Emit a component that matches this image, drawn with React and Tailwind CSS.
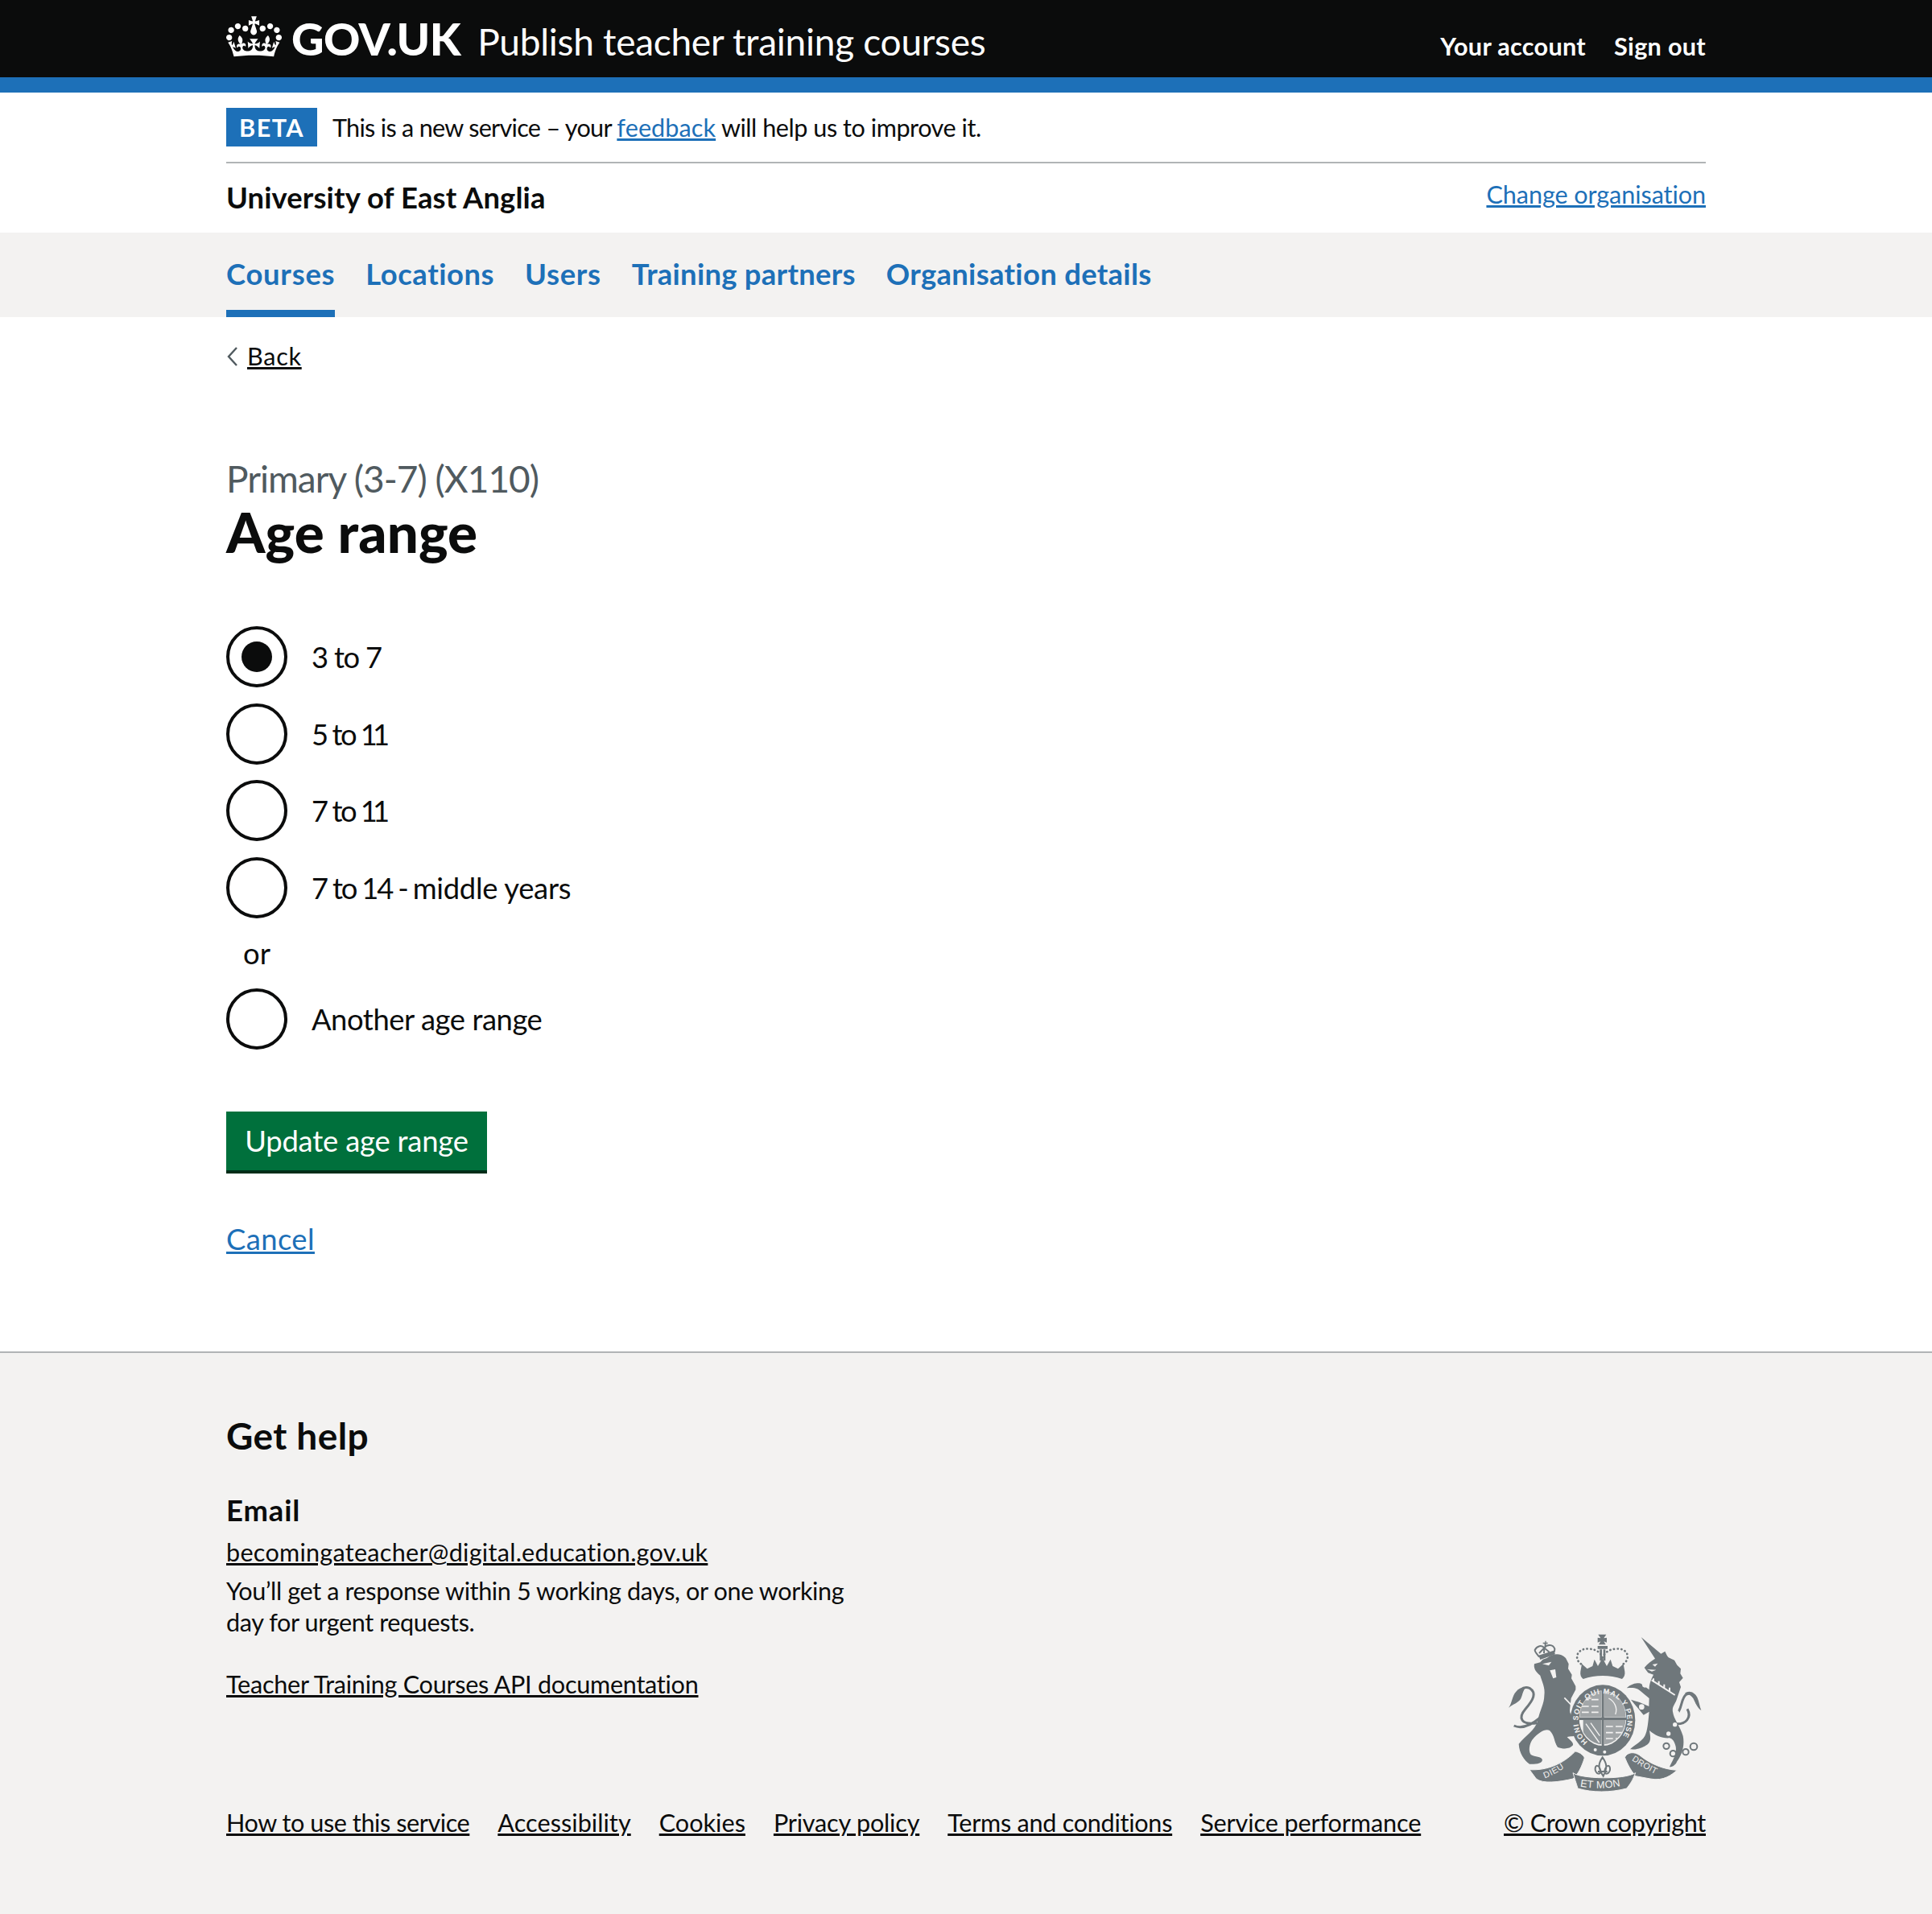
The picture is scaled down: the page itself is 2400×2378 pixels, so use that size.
const crown = "M25 30.2c3.5 1.5 7.7-.2 9.1-3.7 1.5-3.6-.2-7.8-3.9-9.2-3.6-1.4-7.6.3-9.1 3.9-1.4 3.5.3 7.5 3.9 9zM9 39.5c3.6 1.5 7.8-.2 9.2-3.7 1.5-3.6-.2-7.8-3.9-9.1-3.6-1.5-7.6.2-9.1 3.8-1.4 3.5.3 7.5 3.8 9zM4.4 57.2c3.5 1.5 7.7-.2 9.1-3.8 1.5-3.6-.2-7.7-3.9-9.1-3.5-1.5-7.6.3-9.1 3.8-1.4 3.5.3 7.6 3.9 9.1zm38.3-21.4c3.5 1.5 7.7-.2 9.1-3.8 1.5-3.6-.2-7.7-3.9-9.1-3.6-1.5-7.6.3-9.1 3.8-1.3 3.6.4 7.7 3.9 9.1zm64.4-5.6c-3.6 1.5-7.8-.2-9.1-3.7-1.5-3.6.2-7.8 3.8-9.2 3.6-1.4 7.7.3 9.2 3.9 1.3 3.5-.4 7.5-3.9 9zm15.9 9.3c-3.6 1.5-7.7-.2-9.1-3.7-1.5-3.6.2-7.8 3.7-9.1 3.6-1.5 7.7.2 9.2 3.8 1.5 3.5-.3 7.5-3.8 9zm4.7 17.7c-3.6 1.5-7.8-.2-9.2-3.8-1.5-3.6.2-7.7 3.9-9.1 3.6-1.5 7.7.3 9.2 3.8 1.3 3.5-.4 7.6-3.9 9.1zM89.3 35.8c-3.6 1.5-7.8-.2-9.2-3.8-1.4-3.6.2-7.7 3.9-9.1 3.6-1.5 7.7.3 9.2 3.8 1.4 3.6-.3 7.7-3.9 9.1zM69.7 17.7l8.9 4.7V9.3l-8.9 2.8c-.2-.3-.5-.6-.9-.9L72.4 0H59.6l3.5 11.2c-.3.3-.6.5-.9.9l-8.8-2.8v13.1l8.8-4.7c.3.3.6.7.9.9l-5 15.4v.1c-.2.8-.4 1.6-.4 2.4 0 4.1 3.1 7.5 7 8.1h1.2c4-.6 7-4 7-8.1 0-.8-.1-1.7-.4-2.4V34l-5.1-15.4c.6-.2.9-.6 1.2-.9zM66 92.8c16.9 0 32.8 1.1 47.1 3.2 4-16.9 8.9-26.7 14-33.5l-9.6-3.4c1 4.9 1.1 7.2 0 10.2-1.5-1.4-3-4.3-4.2-8.7L108.6 76c2.8-2 5-3.2 7.5-3.3-4.4 9.4-10 11.9-13.6 11.2-4.3-.8-6.3-4.6-5.6-7.9 1-4.7 5.7-5.9 8-.5 4.3-8.7-3-11.4-7.6-8.8 7.1-7.2 7.9-13.5 2.1-21.1-8 6.1-8.1 12.3-4.5 20.8-4.7-5.4-12.1-2.5-9.5 6.2 3.4-5.2 7.9-2 7.2 3.1-.6 4.3-6.4 7.8-13.5 7.2-10.3-.9-10.9-8-11.2-13.8 2.5-.5 7.1 1.8 11 7.3L80.2 60c-4.1 4.4-8 5.3-12.3 5.4 1.4-4.4 8-11.6 8-11.6H55.5s6.4 7.2 7.9 11.6c-4.2-.1-8-1-12.3-5.4l1.4 16.4c3.9-5.5 8.5-7.7 10.9-7.3-.3 5.8-.9 12.8-11.1 13.8-7.2.6-12.9-2.9-13.5-7.2-.7-5 3.8-8.3 7.1-3.1 2.7-8.7-4.6-11.6-9.4-6.2 3.7-8.5 3.6-14.7-4.6-20.8-5.8 7.6-5 13.9 2.2 21.1-4.7-2.6-11.9.1-7.7 8.8 2.3-5.5 7.1-4.2 8.1.5.7 3.3-1.3 7.1-5.7 7.9-3.5.7-9-1.8-13.5-11.2 2.5.1 4.7 1.3 7.5 3.3l-4.7-15.4c-1.2 4.4-2.7 7.2-4.3 8.7-1.1-3-.9-5.3 0-10.2l-9.5 3.4c5 6.9 9.9 16.7 14 33.5 14.8-2.1 30.8-3.2 47.7-3.2z";

function Crest() {
  const g = "#6f777b", bg = "#f3f2f1";
  const sans = "'Liberation Sans',sans-serif";
  return (
    <svg viewBox="0 0 840 720" width="280" height="240" className="block">
      <defs>
        <path id="ring" d="M367 462 A92 100 0 1 1 479 462" />
        <path id="ribL" d="M207 598 Q268 575 315 530" />
        <path id="ribC" d="M338 628 Q425 644 510 622" />
        <path id="ribR" d="M530 530 Q585 568 645 594" />
        <clipPath id="sh"><ellipse cx="423" cy="372" rx="86" ry="100" /></clipPath>
      </defs>
      <path fill="none" stroke={g} strokeWidth="9" d="M190 372 C150 405 120 415 92 402 M178 392 C120 400 105 375 135 340 C165 305 178 280 150 262 C125 252 105 275 100 300" />
      <path fill={g} d="M72 335 C85 320 85 290 100 275 C110 262 125 258 135 260 C120 280 125 300 108 312 C95 322 85 325 72 335 Z" />
      <path fill={g} d="M168 172 L190 166 L200 155 L215 150 C235 135 262 128 285 150 L296 172 L294 190 L308 212 L306 226 L322 255 L322 268 L305 300 L300 345 C300 365 320 378 335 395 L330 432 C320 445 300 440 290 445 C300 455 315 465 312 475 C300 490 275 490 255 482 C240 460 245 440 225 420 C210 412 185 425 160 455 C150 470 145 495 155 510 C170 520 195 515 198 530 C195 545 170 545 150 545 C130 530 112 505 110 470 C135 440 170 420 180 385 C190 340 205 320 205 290 C210 260 195 235 190 215 C170 200 165 185 168 172 Z" />
      <path fill={bg} d="M198 172 L232 164 L222 178 Z M226 196 L246 192 L250 222 L238 226 Z" />
      <path fill="none" stroke={bg} strokeWidth="5" d="M280 298 L332 352" />
      <g fill="none" stroke={g} strokeWidth="6">
        <path d="M186 146 C178 135 170 128 170 120 C178 104 196 100 205 112 C215 98 238 98 244 116 C244 124 240 130 240 130" />
        <path d="M186 132 L205 112 L224 128 M205 112 L204 132" />
      </g>
      <path fill={g} d="M184 140 L240 122 L246 136 L190 156 Z M200 92 H208 V86 H212 V92 H218 V97 H212 V106 H206 V97 H200 Z" />
      <path fill={g} d="M566 72 L640 134 L655 125 C660 135 662 142 668 148 L690 158 L700 176 L714 190 L712 208 L722 224 L708 240 L714 258 L700 300 C695 320 680 330 684 350 C688 380 710 400 722 440 C730 480 715 515 700 535 C695 548 685 556 672 556 C680 535 700 510 695 480 C690 460 682 450 672 448 C645 450 620 440 597 420 C600 440 605 458 590 472 C570 488 545 492 525 490 C540 475 570 460 580 440 C590 420 592 390 596 350 L575 362 L540 320 L528 305 L560 315 L595 330 L596 300 L560 270 C545 258 525 262 512 262 C525 250 545 240 565 245 L596 268 C596 250 600 235 612 212 L592 205 L578 186 C590 170 605 160 618 152 Z" />
      <path fill={bg} d="M608 174 L628 170 L618 182 Z M588 192 L622 194 L606 200 Z" />
      <path fill="none" stroke={g} strokeWidth="9" d="M696 360 C720 345 712 300 735 285 C760 275 772 300 775 320 M690 395 C735 400 755 370 738 340" />
      <path fill={g} d="M790 345 C775 335 770 320 760 300 C752 288 740 282 728 282 C745 268 765 278 775 296 C782 312 784 330 790 345 Z" />
      <path fill="none" stroke={bg} strokeWidth="6" d="M605 232 L692 288 M612 240 V226 M632 250 V236 M652 262 V248 M672 274 V260" />
      <g fill={bg}><circle cx="698" cy="355" r="10"/><circle cx="692" cy="398" r="8"/><circle cx="668" cy="432" r="8"/><circle cx="580" cy="250" r="10"/><circle cx="568" cy="332" r="10"/></g>
      <g fill="none" stroke={g} strokeWidth="6"><circle cx="660" cy="478" r="11"/><circle cx="685" cy="506" r="11"/><circle cx="732" cy="500" r="11"/><circle cx="762" cy="480" r="13"/></g>
      <path fill={g} d="M340 200 L345 172 L365 190 L385 180 L392 155 L405 180 L422 150 L438 180 L452 155 L460 180 L480 190 L500 172 L505 200 C507 212 502 222 495 228 C450 212 395 212 350 228 C342 222 338 212 340 200 Z" />
      <g fill="none" stroke={g} strokeWidth="8" strokeDasharray="1 13" strokeLinecap="round">
        <path d="M342 172 C312 150 330 110 375 116 C400 118 415 130 422 148 C430 130 445 118 470 116 C515 110 530 150 500 172" />
      </g>
      <path fill={g} d="M406 62 L436 62 L427 76 L438 74 V92 L427 88 L434 100 H408 L415 88 L404 92 V74 L415 76 Z M412 118 H420 V160 H412 Z M425 118 H433 V160 H425 Z M404 105 H441 V116 H404 Z" />
      <ellipse cx="423" cy="382" rx="121" ry="132" fill={g} />
      <ellipse cx="423" cy="374" rx="88" ry="103" fill={bg} />
      <g clipPath="url(#sh)">
        <path fill={g} fillOpacity="0.62" d="M335 270 H418 V370 H335 Z M429 270 H515 V370 H429 Z M429 381 H515 V480 H429 Z" />
        <path fill={g} d="M350 381 H418 V480 H350 Z" fillOpacity="0.75" />
        <path fill="none" stroke={bg} strokeWidth="5" strokeDasharray="26 10" d="M345 305 H415 M345 330 H415 M345 352 H415 M435 428 H505 M435 405 H505 M435 450 H505" />
        <path fill="none" stroke={bg} strokeWidth="4" d="M360 395 L410 465 M378 392 L412 440 M445 300 C465 310 480 335 470 360" />
      </g>
      <path fill={g} d="M419 270 H428 V490 H419 Z M335 371 H512 V381 H335 Z" />
      <text fontFamily={sans} fontSize="27" fontWeight="700" fill={bg} textLength="452" lengthAdjust="spacing">
        <textPath href="#ring">HONI SOIT QUI MAL Y PENSE</textPath>
      </text>
      <g fill={bg}><circle cx="395" cy="492" r="6"/><circle cx="430" cy="500" r="6"/></g>
      <path fill={g} stroke={bg} strokeWidth="3" d="M150 566 C215 570 275 545 320 498 C335 500 350 510 355 522 C345 555 330 585 312 600 C260 612 200 620 175 600 Z" />
      <path fill={g} stroke={bg} strokeWidth="3" d="M505 520 C515 500 540 498 560 512 C600 545 650 565 700 568 C680 585 650 610 600 600 L545 590 C525 565 515 545 505 520 Z" />
      <path fill={g} stroke={bg} strokeWidth="3" d="M312 578 C340 600 500 605 545 578 C535 605 525 620 512 636 C450 652 385 652 330 636 C325 618 318 600 312 578 Z" />
      <text fontFamily={sans} fontSize="32" fill={bg} letterSpacing="2"><textPath href="#ribL">DIEU</textPath></text>
      <text fontFamily={sans} fontSize="38" fill={bg} letterSpacing="1"><textPath href="#ribC">ET MON</textPath></text>
      <text fontFamily={sans} fontSize="32" fill={bg} letterSpacing="1"><textPath href="#ribR">DROIT</textPath></text>
      <path fill="none" stroke={g} strokeWidth="6" d="M422 520 C440 545 440 560 425 590 C405 560 405 545 422 520 Z M395 567 C393 545 410 547 415 570 C415 585 400 585 395 567 Z M450 567 C452 545 435 547 430 570 C430 585 445 585 450 567 Z M405 573 H440" />
    </svg>
  );
}

function Radio({ children, checked, track = "" }) {
  return (
    <div className="flex items-center h-[76px]">
      <span className="w-[76px] h-[76px] rounded-full border-[4px] border-[#0b0c0c] flex items-center justify-center shrink-0 bg-white">
        {checked && <span className="w-[38px] h-[38px] rounded-full bg-[#0b0c0c]" />}
      </span>
      <span className={`ml-[30px] text-[36.4px] leading-[48px] text-[#0b0c0c] ${track}`}>{children}</span>
    </div>
  );
}

export default function App() {
  const navs = [
    ["Courses", "tracking-[0.75px]"],
    ["Locations", "tracking-[0.55px]"],
    ["Users", "tracking-[0.7px]"],
    ["Training partners", "tracking-[0.28px]"],
    ["Organisation details", "tracking-[0.32px]"],
  ];
  const foot = [
    ["How to use this service", "tracking-[-0.43px]"],
    ["Accessibility", "tracking-[0.05px]"],
    ["Cookies", "tracking-[0.01px]"],
    ["Privacy policy", "tracking-[-0.2px]"],
    ["Terms and conditions", "tracking-[-0.27px]"],
    ["Service performance", "tracking-[-0.12px]"],
  ];
  return (
    <div className="bg-white min-h-[2378px] text-[#0b0c0c] font-['Lato','Noto_Sans',sans-serif] flex flex-col">
      <header className="bg-[#0b0c0c] h-[115px] border-b-[19px] border-[#1d70b8] px-[281px] flex justify-between items-start text-white">
        <div className="flex items-start pt-[20px]">
          <svg viewBox="0 0 132 97" width="69" height="51" fill="currentColor"><path fillRule="evenodd" d={crown} /></svg>
          <span className="ml-[12px] text-[56px] leading-[56px] font-black tracking-[-0.5px]">GOV.UK</span>
          <span className="ml-[21px] text-[46px] leading-[56px] pt-[4px] tracking-[-0.27px]">Publish teacher training courses</span>
        </div>
        <div className="flex gap-[35px] pt-[35px] text-[30.6px] leading-[45px] font-bold tracking-[0.3px]">
          <a>Your account</a>
          <a>Sign out</a>
        </div>
      </header>

      <div className="mx-[281px]">
        <div className="h-[88px] border-b-2 border-[#b1b4b6] flex items-start pt-[19px]">
          <span className="bg-[#1d70b8] text-white font-bold text-[30.6px] leading-[50px] h-[48px] w-[113px] text-center tracking-[1.4px]">BETA</span>
          <span className="ml-[19px] text-[30.6px] leading-[49px] tracking-[-0.46px]"><span className="tracking-[-0.71px]">This is a new service – your </span><a className="text-[#1d70b8] underline tracking-[0.08px]">feedback</a> will help us to improve it.</span>
        </div>
        <div className="h-[86px] flex justify-between items-start">
          <span className="text-[36.4px] leading-[84px] font-bold tracking-[0.12px]">University of East Anglia</span>
          <a className="text-[30.6px] leading-[78px] text-[#1d70b8] underline tracking-[-0.08px]">Change organisation</a>
        </div>
      </div>

      <nav className="bg-[#f3f2f1] h-[105px] px-[281px] flex gap-[38px]">
        {navs.map(([n, t], i) => (
          <a key={n} className={`text-[36.4px] leading-[103px] font-bold text-[#1d70b8] h-[105px] ${t} ${i === 0 ? "border-b-[9px] border-[#1d70b8]" : ""}`}>{n}</a>
        ))}
      </nav>

      <main className="px-[281px] flex-1">
        <div className="pt-[26px] flex items-center h-[72px]">
          <svg width="16" height="26" viewBox="0 0 16 26" fill="none" stroke="#505a5f" strokeWidth="2.4"><path d="M13 2 L3 13 L13 24" /></svg>
          <a className="ml-[10px] text-[30.6px] leading-[48px] underline tracking-[0.7px]">Back</a>
        </div>
        <div className="pt-[99px] text-[46px] leading-[59px] text-[#505a5f] tracking-[-1px]">Primary (3-7) (X110)</div>
        <h1 className="text-[69px] leading-[74px] font-black tracking-[0.15px]">Age range</h1>
        <div className="pt-[80px] flex flex-col gap-[19.6px]">
          <Radio checked track="tracking-[-1.27px]">3 to 7</Radio>
          <Radio><span className="tracking-[-2.5px]">5 to </span><span className="tracking-[-6px]">11</span></Radio>
          <Radio><span className="tracking-[-2.5px]">7 to </span><span className="tracking-[-6px]">11</span></Radio>
          <Radio><span className="tracking-[-2.2px]">7 to 14 - </span><span className="tracking-[-0.3px]">middle years</span></Radio>
          <div className="w-[76px] text-center text-[36.4px] leading-[48px]">or</div>
          <Radio track="tracking-[-0.45px]">Another age range</Radio>
        </div>
        <button className="block mt-[77.5px] w-[324px] h-[77px] bg-[#00703c] border-b-[4px] border-[#002d18] text-white text-[36.4px] leading-[73px] text-center tracking-[-0.2px]">Update age range</button>
        <a className="block mt-[56.5px] text-[36.4px] leading-[48px] text-[#1d70b8] underline tracking-[0.4px]">Cancel</a>
      </main>

      <footer className="bg-[#f3f2f1] border-t-2 border-[#b1b4b6] h-[699px] px-[281px] pt-[73px] pb-[93px] flex justify-between items-stretch">
        <div className="flex flex-col justify-between">
          <div>
            <h2 className="text-[46px] leading-[60px] font-bold tracking-[0.4px]">Get help</h2>
            <div className="w-[800px]">
              <h3 className="mt-[38px] text-[36.4px] leading-[48px] font-bold tracking-[0.9px]">Email</h3>
              <a className="block mt-[9px] text-[30.6px] leading-[40px] underline tracking-[0.26px]">becomingateacher@digital.education.gov.uk</a>
              <p className="mt-[8px] text-[30.6px] leading-[39px] tracking-[-0.39px]">You’ll get a response within 5 working days, or one working day for urgent requests.</p>
              <a className="block mt-[38px] text-[30.6px] leading-[40px] underline tracking-[-0.27px]">Teacher Training Courses API documentation</a>
            </div>
          </div>
          <div className="flex gap-[35px] text-[30.6px] leading-[40px] whitespace-nowrap">
            {foot.map(([f, t]) => <a key={f} className={`underline ${t}`}>{f}</a>)}
          </div>
        </div>
        <div className="flex flex-col justify-end items-end">
          <div className="mr-[-11px] mb-[-5px]">
            <Crest />
          </div>
          <a className="underline text-[30.6px] leading-[40px] whitespace-nowrap tracking-[-0.33px]">© Crown copyright</a>
        </div>
      </footer>
    </div>
  );
}
